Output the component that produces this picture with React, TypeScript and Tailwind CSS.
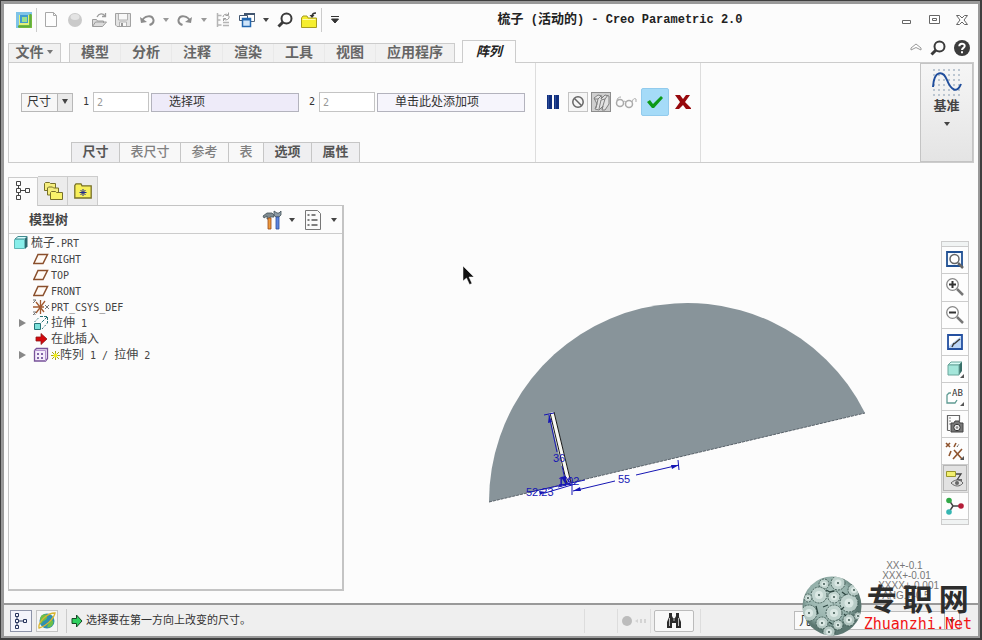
import type { ReactNode } from "react";

const quickIcons: Record<string, ReactNode> = {
  app: (
    <>
      <rect width="16" height="16" fill="#8cc63f" />
      <path d="M0 0h16v3H3v13H0z" fill="#7fc4e8" />
      <path d="M3 3h10v10H3z" fill="#e3f07c" />
      <path d="M4 3h8v8H4z" fill="#3f9bd0" />
      <path d="M6 5h5v5H6z" fill="#9be08f" />
      <path d="M14.500 2v12.500H2" fill="none" stroke="#5fae3f" strokeWidth="2" />
    </>
  ),
  new: (
    <path d="M2.500 .5h8l3 3v11h-11zM10.500 .5v3h3" fill="#fdfdfd" stroke="#a8a8a8" />
  ),
  sphere: (
    <>
      <circle cx="8" cy="8" r="7" fill="#cacaca" />
      <ellipse cx="8" cy="5" rx="4.500" ry="3" fill="#e4e4e4" />
    </>
  ),
  open: (
    <>
      <path d="M1.500 14V7.500h4l1 1.500h6v2M1.500 14.500l3-4.500h11l-4 4.500z" fill="#dcdcdc" stroke="#9c9c9c" />
      <path d="M6 5c2-4 6-4 8-1M14.500 1v3.500H11" fill="none" stroke="#9c9c9c" strokeWidth="1.300" />
    </>
  ),
  save: (
    <>
      <path d="M.5 1.500h15v13H2l-1.500-1.500z" fill="#e3e3e3" stroke="#a2a2a2" />
      <path d="M3.500 2v6h9V2M4.500 14v-4h7v4" fill="#f8f8f8" stroke="#b3b3b3" />
      <path d="M6 11h2v3H6z" fill="#999" />
    </>
  ),
  undo: (
    <>
      <path d="M3 9C5 4 13 2 14.500 8c.3 2.500-1 4-4 5" fill="none" stroke="#8c8c8c" strokeWidth="2" />
      <path d="M1 5l1 6 6-1z" fill="#8c8c8c" />
    </>
  ),
  redo: (
    <>
      <path d="M13 9C11 4 3 2 1.500 8c-.3 2.500 1 4 4 5" fill="none" stroke="#8c8c8c" strokeWidth="2" />
      <path d="M15 5l-1 6-6-1z" fill="#8c8c8c" />
    </>
  ),
  regen: (
    <>
      <path d="M2.500 1v14M2.500 3.500h4M2.500 8h3M2.500 13h4M8 10.500h6M8 13.500h6" fill="none" stroke="#b5b5b5" strokeWidth="1.500" />
      <path d="M8 5a3 3 0 0 1 5-2M14 4a3 3 0 0 1-5 3M13.500.5v3h-3M8.500 9V6.500H11" fill="none" stroke="#9e9e9e" />
    </>
  ),
  windows: (
    <>
      <path d="M5.500 1.500h10v8h-10z" fill="#fff" stroke="#55677d" />
      <path d="M5 1h11v2H5z" fill="#41556f" />
      <path d="M.5 3.500h8v5h-8z" fill="#fff" stroke="#41556f" />
      <path d="M3.500 6.500h8v8h-8z" fill="#cfe5fa" stroke="#2367b0" strokeWidth="1.500" />
      <path d="M3 6h9v2.500H3z" fill="#2367b0" />
    </>
  ),
  search: (
    <>
      <circle cx="9.500" cy="6.500" r="5" fill="none" stroke="#3a3a3a" strokeWidth="2" />
      <path d="M6 10l-4.500 4.500" stroke="#3a3a3a" strokeWidth="3" />
    </>
  ),
  folder: (
    <>
      <path d="M.5 15.500v-9.500l1.500-2h4l1 2h8.500v9.500z" fill="#f6ee2e" stroke="#a79c1e" />
      <path d="M1.500 7.500h13" stroke="#fffab0" />
      <path d="M11 4.500c0-2.500 1.500-3.500 4-3.500" fill="none" stroke="#333" strokeWidth="1.500" />
      <path d="M8.500 3h5L11 6z" fill="#333" />
    </>
  ),
};

function Icon({ children, className = "size-4", box = "0 0 16 16" }: { children: ReactNode; className?: string; box?: string }) {
  return (
    <svg aria-hidden="true" className={`shrink-0 ${className}`} viewBox={box}>
      {children}
    </svg>
  );
}

function Caret({ className = "text-[#444]" }: { className?: string }) {
  return (
    <svg aria-hidden="true" className={`h-1 w-2 shrink-0 ${className}`} viewBox="0 0 8 4">
      <path d="M1 0h6L4 4z" fill="currentColor" />
    </svg>
  );
}

function QuickButton({ name, label }: { name: string; label: string }) {
  return (
    <button aria-label={label} className="size-4 shrink-0" type="button">
      <Icon>{quickIcons[name]}</Icon>
    </button>
  );
}

function TitleBar() {
  return (
    <header className="flex h-9 items-center pr-[10px] pb-1 pl-3">
      <div className="flex h-6 items-center gap-2">
        <div className="-mr-[2px] flex h-full items-center gap-1 border-r border-[#ccc] pr-1">
          <QuickButton label="Creo" name="app" />
        </div>
        <QuickButton label="新建" name="new" />
        <QuickButton label="模型显示" name="sphere" />
        <QuickButton label="打开" name="open" />
        <QuickButton label="保存" name="save" />
        <QuickButton label="撤消" name="undo" />
        <span className="-mx-px">
          <Caret className="text-[#999]" />
        </span>
        <QuickButton label="重做" name="redo" />
        <span className="-mx-px">
          <Caret className="text-[#999]" />
        </span>
        <QuickButton label="重新生成" name="regen" />
        <QuickButton label="窗口" name="windows" />
        <span className="-mx-px">
          <Caret />
        </span>
        <QuickButton label="搜索" name="search" />
        <QuickButton label="关闭" name="folder" />
        <button aria-label="自定义" className="-ml-1 flex h-6 items-center border-l border-[#ccc] pl-2" type="button">
          <Icon box="0 0 10 8" className="h-2 w-[10px]">
            <path d="M1 .5h8M1.500 3h7L5 7z" fill="#333" stroke="#333" />
          </Icon>
        </button>
      </div>
      <h1 className="flex-1 text-center font-['Liberation_Mono','Noto_Sans_CJK_SC',monospace] text-xs font-bold whitespace-pre text-[#222]">
        <span className="text-[13px]">梳子</span> (<span className="text-[13px]">活动的</span>) - Creo Parametric 2.0
      </h1>
      <div className="flex items-center gap-4">
        <button aria-label="最小化" type="button">
          <Icon className="h-3 w-3" box="0 0 12 12">
            <path d="M2.500 6.500h8v3h-8z" fill="#fff" stroke="#666" />
          </Icon>
        </button>
        <button aria-label="最大化" type="button">
          <Icon className="h-3 w-3" box="0 0 12 12">
            <path d="M1.500 1.500h10v8h-10zM4.500 4.500h4v2h-4z" fill="#fff" stroke="#666" />
          </Icon>
        </button>
        <button aria-label="关闭窗口" type="button">
          <Icon className="h-3 w-3" box="0 0 12 12">
            <path d="M.5 1.500h3L6 4l2.500-2.500h3L8 6l3.500 4.500h-3L6 8l-2.500 2.500h-3L4 6z" fill="#fff" stroke="#666" />
          </Icon>
        </button>
      </div>
    </header>
  );
}

function RibbonTabs() {
  return (
    <nav className="mx-1 flex h-[22px] items-end text-sm font-bold text-[#666]">
      <button className="mr-2 flex h-[19px] w-[53px] items-center justify-center gap-[2px] border border-b-0 border-[#ccc] bg-[#f1f1f1] pb-[2px]" type="button">
        文件
        <Caret className="text-[#777]" />
      </button>
      <div className="flex h-[19px] border border-b-0 border-[#ccc] bg-[#f1f1f1]">
        {["模型", "分析", "注释", "渲染", "工具", "视图"].map((tab) => (
          <button className="w-[51px] border-r border-[#e9e9e9] pb-[2px] leading-4" key={tab} type="button">
            {tab}
          </button>
        ))}
        <button className="w-[78px] pb-[2px] leading-4" type="button">
          应用程序
        </button>
      </div>
      <button className="relative top-px ml-[7px] h-[23px] w-[54px] border border-b-0 border-[#ccc] bg-[#fcfcfc] text-[13px] text-[#222] italic" type="button">
        阵列
      </button>
      <div className="flex h-full flex-1 items-center justify-end gap-2 pr-1 pb-2">
        <button aria-label="折叠功能区" type="button">
          <Icon box="0 0 12 8" className="h-2 w-3">
            <path d="M1 5l5-4 5 4v2L6 4.500 1 7z" fill="#fff" stroke="#999" />
          </Icon>
        </button>
        <button aria-label="命令搜索" className="mt-[2px]" type="button">
          <Icon>{quickIcons.search}</Icon>
        </button>
        <button aria-label="帮助" className="mt-[2px]" type="button">
          <Icon>
            <circle cx="8" cy="8" r="8" fill="#3c3c3c" />
            <path d="M5.300 6.300c0-3.500 5.400-3.300 5.400-.3 0 1.800-2.700 1.900-2.700 4M8 11.200v2" fill="none" stroke="#fff" strokeWidth="2" />
          </Icon>
        </button>
      </div>
    </nav>
  );
}

const dashTabs = [
  { label: "尺寸", active: true, width: "w-[49px]" },
  { label: "表尺寸", active: false, width: "w-[62px]" },
  { label: "参考", active: false, width: "w-[49px]" },
  { label: "表", active: false, width: "w-9" },
  { label: "选项", active: true, width: "w-[49px]" },
  { label: "属性", active: true, width: "w-[49px]" },
];

function DimensionInput({ id, label, text, field }: { id: string; label: string; text: string; field: string }) {
  return (
    <>
      <label className="w-5 pr-1 text-right font-['DejaVu_Sans_Mono',monospace] text-[10px]" htmlFor={id}>
        {label}
      </label>
      <input
        className="h-5 w-14 border border-[#c4c4c4] bg-white px-[3px] font-['DejaVu_Sans_Mono',monospace] text-[10px] text-[#999]"
        defaultValue="2"
        id={id}
      />
      <button className={`ml-[2px] h-[19px] w-[148px] border border-[#b3b3bd] pl-[17px] text-left leading-4 ${field}`} type="button">
        {text}
      </button>
    </>
  );
}

function Ribbon() {
  return (
    <section className="mx-1 flex h-[101px] border border-[#ccc]">
      <div className="flex w-[527px] flex-col justify-between border-r border-[#ddd]">
        <div className="flex items-center pt-[29px] pl-3 text-xs text-[#333]">
          <div className="relative">
            <select
              aria-label="阵列类型"
              className="h-[19px] w-[52px] appearance-none border border-[#b8b8b8] bg-[#f7f7f7] pl-[5px] leading-4"
            >
              <option>尺寸</option>
            </select>
            <span className="pointer-events-none absolute inset-y-0 right-0 flex w-4 items-center justify-center border border-[#b8b8b8] bg-[#eaeaea]">
              <Icon box="0 0 8 6" className="h-[6px] w-2">
                <path d="M1 0h6L4 5z" fill="#444" />
              </Icon>
            </span>
          </div>
          <DimensionInput field="bg-[#eeebf9]" id="dim-1" label="1" text="选择项" />
          <DimensionInput field="bg-[#f6f5fc]" id="dim-2" label="2" text="单击此处添加项" />
        </div>
        <div className="ml-[62px] flex h-5 text-[13px]">
          {dashTabs.map((tab) => (
            <button
              className={`-mr-px h-full border border-b-0 border-[#c6c6c6] pb-[2px] leading-4 ${tab.width} ${
                tab.active ? "bg-[#efeff1] font-bold text-[#555]" : "bg-[#f8f8f8] font-medium text-[#808080]"
              }`}
              key={tab.label}
              type="button"
            >
              {tab.label}
            </button>
          ))}
        </div>
      </div>
      <div className="flex w-[165px] items-center border-r border-[#ddd] pb-[21px] pl-[10px]">
        <button aria-label="暂停" className="mr-2" type="button">
          <Icon box="0 0 14 14" className="size-[14px]">
            <path d="M1 0h5v14H1zM8 0h5v14H8z" fill="#12307e" />
            <path d="M2 0h1v14H2zM9 0h1v14H9z" fill="#2a4c98" />
          </Icon>
        </button>
        <button aria-label="无预览" className="mr-[3px] flex size-5 items-center justify-center border border-[#c4c4c4] bg-[#f6f6f6]" type="button">
          <Icon box="0 0 14 14" className="size-[14px]">
            <circle cx="7" cy="7" r="5.200" fill="none" stroke="#666" strokeWidth="1.500" />
            <path d="M3.500 3.500l7 7" stroke="#666" strokeWidth="1.500" />
          </Icon>
        </button>
        <button aria-label="分离预览" className="mr-1 flex size-5 items-center justify-center border border-[#8d8d8d] bg-[#cfcfcf]" type="button">
          <Icon box="0 0 18 18" className="size-[18px]">
            <path d="M2 5l4-3 4 1-1 3 4-4 4 1v8l-4 6h-3l1-4-4 4-4-1 2-5z" fill="#e2e2e2" stroke="#808080" />
            <path d="M2 6h4l3-3M6 6l-2 9M9 7l-2 9M13 6l-3 10M9 7l4-1 3-4" fill="none" stroke="#808080" />
          </Icon>
        </button>
        <button aria-label="特征预览" className="mr-1" type="button">
          <Icon box="0 0 22 16" className="h-4 w-[22px]">
            <circle cx="5" cy="9" r="3.500" fill="none" stroke="#aaa" strokeWidth="1.500" />
            <circle cx="14" cy="10" r="3.500" fill="none" stroke="#aaa" strokeWidth="1.500" />
            <path d="M8 8c1-1 2-1 3 0M2 7c0-3 2-4 4-4M17 8c1-3 2-4 4-3v3" fill="none" stroke="#aaa" />
          </Icon>
        </button>
        <button aria-label="确定" className="mr-[6px] flex size-7 items-center justify-center rounded-[2px] border border-[#92cbed] bg-[#a5dbf8]" type="button">
          <Icon box="0 0 18 16" className="h-4 w-[18px]">
            <path d="M1 8l3-2 3 4L15 2l2 2-9 10H6z" fill="#0d9a18" />
          </Icon>
        </button>
        <button aria-label="取消" type="button">
          <Icon>
            <path d="M0 1h5l3 4 3-4h4l-5 7 6 6v1h-5l-3-4-4 4H0l5-7z" fill="#97090d" />
          </Icon>
        </button>
      </div>
      <div className="flex-1" />
      <button
        className="flex w-[53px] flex-col items-center border border-[#c4c4c4] bg-linear-to-b from-[#f6f6f6] to-[#e4e4e4] pt-1 text-[13px] font-bold text-[#444]"
        type="button"
      >
        <Icon box="0 0 30 30" className="size-[30px]">
          {[2, 7, 12, 17, 22, 27].map((y) => (
            <path d={`M1 ${y}h28`} key={y} stroke="#a9b8c6" strokeDasharray="2 3" strokeWidth="1.500" />
          ))}
          <path d="M1 19C2 2 11 2 15 12s10 14 14 4" fill="none" stroke="#1f4d9c" strokeWidth="2" />
        </Icon>
        <span className="mb-2 leading-4">基准</span>
        <Caret />
      </button>
    </section>
  );
}

const treeGlyphs: Record<string, ReactNode> = {
  part: (
    <>
      <path d="M2 4l3-2.500h9L12 4z" fill="#d8ffff" stroke="#438b90" />
      <path d="M12 4l2.500-2.500v10L12 14z" fill="#2b686e" />
      <path d="M1.500 4.500h10v9h-10z" fill="#87eeea" stroke="#5fb6b6" />
    </>
  ),
  plane: <path d="M5 3.500h9.500l-4.500 9H.8z" fill="#fffaf5" stroke="#8a4f2c" strokeWidth="1.500" />,
  csys: (
    <>
      <path d="M0 8h11M7.500 1v14M3 3l8 10M12 2L3 14" fill="none" stroke="#a25b31" strokeWidth="1.300" />
      <path d="M12 6l4 4M16 6l-4 4M0 1h3M0 4l3-3M0 13h3l-3 3h3" fill="none" stroke="#777" />
    </>
  ),
  extrude: (
    <>
      <path d="M1.500 8.500h6v6h-6z" fill="#7be0da" stroke="#257276" />
      <path d="M1.500 7l5-5M9 14l5.500-6" stroke="#357c81" strokeDasharray="2 1.500" />
      <path d="M7 1.500h7.500V8M14 2L8 8" fill="none" stroke="#257276" strokeDasharray="3 1" />
    </>
  ),
  insert: <path d="M3 6h5V2.500L14 8l-6 5.500V10H3z" fill="#d4080d" stroke="#8d1a1a" strokeWidth=".8" />,
  pattern: (
    <>
      <path d="M1.500 3.500l2-2h11v10l-2 2.500h-11z" fill="#f4edfb" stroke="#775299" strokeWidth="1.300" />
      <path d="M12.500 14V3.500h-11" fill="none" stroke="#b394cf" />
      <path d="M4 6h2v2H4zM8 6h2v2H8zM4 10h2v2H4zM8 10h2v2H8z" fill="#8266a8" />
    </>
  ),
};

const treeItems: { glyph: string; label: string; latin?: string; expandable?: boolean; marked?: boolean }[] = [
  { glyph: "plane", label: "", latin: "RIGHT" },
  { glyph: "plane", label: "", latin: "TOP" },
  { glyph: "plane", label: "", latin: "FRONT" },
  { glyph: "csys", label: "", latin: "PRT_CSYS_DEF" },
  { glyph: "extrude", label: "拉伸", latin: " 1", expandable: true },
  { glyph: "insert", label: "在此插入" },
  { glyph: "pattern", label: "阵列 1 / 拉伸 2", expandable: true, marked: true },
];

function Latin({ children }: { children: ReactNode }) {
  return <span className="font-['DejaVu_Sans_Mono',monospace] text-[10px]">{children}</span>;
}

function ModelTree() {
  return (
    <aside className="ml-1 flex w-[336px] shrink-0 flex-col pt-[13px] pb-3">
      <div className="flex h-[29px]">
        <button aria-label="模型树" className="relative top-px flex h-[29px] w-[30px] items-center justify-center border border-b-0 border-[#ccc] bg-[#fcfcfc] pb-1" type="button">
          <Icon box="0 0 14 20" className="h-5 w-[14px]">
            <path d="M.5 1.500h4v4h-4zM.5 8.500h4v4h-4zM.5 15.500h4v4h-4zM9.500 8.500h4v4h-4zM2.500 5.500v3M2.500 12.500v3M4.500 10.500h5" fill="none" stroke="#444" />
          </Icon>
        </button>
        <button aria-label="文件夹浏览器" className="flex w-[30px] items-center justify-center border border-b-0 border-l-0 border-[#ccc] bg-[#ececec]" type="button">
          <Icon box="0 0 20 20" className="size-5">
            <path d="M1.500 9.500v-7l1-1h4l1 1h5v7z" fill="#f5ee7e" stroke="#77702a" />
            <path d="M4.500 14v-7l1-1h4l1 1h5v7z" fill="#f5ee7e" stroke="#77702a" />
            <path d="M7.500 18.500v-7l1-1h4l1 1h6v7z" fill="#f8f26a" stroke="#77702a" />
          </Icon>
        </button>
        <button aria-label="收藏夹" className="flex w-[30px] items-center justify-center border border-b-0 border-l-0 border-[#ccc] bg-[#ececec]" type="button">
          <Icon box="0 0 18 16" className="h-4 w-[18px]">
            <path d="M.8 15V2.500l1.200-1.700h5l1 2h9.200V15z" fill="#f8f05a" stroke="#77702a" strokeWidth="1.300" />
            <path d="M9 6v7M5.500 9.500h7M6.500 7l5 5M11.500 7l-5 5" stroke="#222a8c" />
          </Icon>
        </button>
      </div>
      <div className="flex-1 border border-r-2 border-b-2 border-[#c4c4c4]">
        <div className="flex h-7 items-center border-b border-[#ccc] pr-1 pl-5">
          <h2 className="flex-1 text-[13px] font-bold text-[#444]">模型树</h2>
          <button aria-label="设置" className="mr-2 flex items-center gap-[6px]" type="button">
            <Icon box="0 0 20 20" className="size-5">
              <path d="M1 6l4-3h5l2 2v2H8v2H5V6L2 8z" fill="#7f8b91" stroke="#435057" strokeWidth=".8" />
              <path d="M6 8h3v11H6z" fill="#ed9a3d" stroke="#9a4a1b" strokeWidth=".8" />
              <path d="M12 1v4l2 2h3l2-2V1l-2 2h-2z" fill="#8c9aa5" stroke="#435057" strokeWidth=".8" />
              <path d="M14 7h3v12h-3z" fill="#5d86df" stroke="#2c4c9a" strokeWidth=".8" />
            </Icon>
            <Caret />
          </button>
          <button aria-label="显示" className="flex items-center gap-2" type="button">
            <Icon box="0 0 18 20" className="h-5 w-[18px]">
              <path d="M1.500.5h12l3 3v16h-15z" fill="#fafafa" stroke="#777" />
              <path d="M3.500 5h2M3.500 10h2M3.500 15h2M7.500 5h4M7.500 10h6M7.500 15h6" stroke="#555" strokeWidth="1.500" />
            </Icon>
            <Caret />
          </button>
        </div>
        <ul className="pt-px text-xs leading-4 whitespace-pre text-[#444]">
          <li className="flex h-4 items-center gap-[2px] pl-1">
            <Icon>{treeGlyphs.part}</Icon>
            <span className="leading-4">
              梳子<Latin>.PRT</Latin>
            </span>
          </li>
          {treeItems.map((item) => (
            <li className="flex h-4 items-center pl-2" key={item.glyph + item.latin}>
              <span className="w-4 shrink-0">
                {item.expandable && (
                  <button aria-label="展开" className="block" type="button">
                    <Icon box="0 0 10 10" className="size-[10px]">
                      <path d="M2 1l7 4-7 4z" fill="#888" />
                    </Icon>
                  </button>
                )}
              </span>
              <Icon>{treeGlyphs[item.glyph]}</Icon>
              {item.marked ? (
                <span className="ml-[2px] flex items-center leading-4">
                  <Icon box="0 0 9 9" className="size-[9px]">
                    <path d="M4.500 0v9M0 4.500h9M1 1l7 7M8 1L1 8" stroke="#a9a71c" />
                    <circle cx="4.500" cy="4.500" r="2" fill="#f3f01c" />
                  </Icon>
                  <span>
                    阵列<Latin> 1 / </Latin>拉伸<Latin> 2</Latin>
                  </span>
                </span>
              ) : (
                <span className="ml-[2px] leading-4">
                  {item.label}
                  {item.latin && <Latin>{item.latin}</Latin>}
                </span>
              )}
            </li>
          ))}
        </ul>
      </div>
    </aside>
  );
}

function Viewport() {
  return (
    <div className="relative min-w-0 flex-1">
      <svg aria-label="梳子" className="absolute inset-0 size-full" role="img" viewBox="344 163 597 440">
        <path d="M489 502A198.400 198.400 0 0 1 865 413Z" fill="#88949a" />
        <path d="M489 502L865 413" stroke="#59626a" strokeDasharray="3 1" />
        <path d="M549 413l5-1 17 70-5 2z" fill="#f7f7f2" />
        <path d="M554 412l17 71M550 413l17 71" fill="none" stroke="#1a1a1a" />
        <g fill="none" stroke="#1616b4">
          <path d="M544 415l10-2M549 415l8 37M562 466l4 18M530 492l55-12M545 493l30-9M572 484v11M573 491l42-10M636 475l43-10M678 460l1 10" />
          <path d="M558 487l12-3M561 478v9M566 477l5 9M571 477l-6 9" />
        </g>
        <path d="M549 415l-1 8 4-1zM566 485l-5-8 5-1zM573 491l7-4 1 4zM679 465l-8 0 1 4zM546 492l-7-1 1 4z" fill="#1616b4" />
        <g className="font-['Liberation_Sans',sans-serif] text-[11px]" fill="#1616b4">
          <text x="553" y="462">36</text>
          <text x="618" y="483">55</text>
          <text x="526" y="496">52.23</text>
          <text x="558" y="485">1.92</text>
        </g>
        <path d="M463 266v15l3.500-3 3 6.500 2.500-1-3-6.500h5z" fill="#111" stroke="#fff" strokeWidth=".5" />
      </svg>
      <div className="absolute right-[2px] bottom-[2px] text-[10px] leading-[10px] text-[#777]">
        <p className="pl-2">XX+-0.1</p>
        <p className="pl-1">XXX+-0.01</p>
        <p>XXXX+-0.001</p>
        <p className="pl-1">ANG.+-0.5</p>
      </div>
    </div>
  );
}

const corner = <path d="M19 15v4h-4z" fill="#555" />;

const viewTools: { label: string; active?: boolean; glyph: ReactNode }[] = [
  {
    label: "重新调整",
    glyph: (
      <>
        <path d="M2 2h15v14H2z" fill="#f5faff" stroke="#205093" strokeWidth="1.800" />
        <circle cx="9.500" cy="9" r="4.500" fill="#fff" stroke="#666" strokeWidth="1.500" />
        <path d="M13 13l5 5" stroke="#666" strokeWidth="2.500" />
      </>
    ),
  },
  {
    label: "放大",
    glyph: (
      <>
        <circle cx="7.500" cy="7.500" r="5.800" fill="#fff" stroke="#888" strokeWidth="1.300" />
        <path d="M4 7.500h7M7.500 4v7" stroke="#333" strokeWidth="2" />
        <path d="M12 12l6 6" stroke="#777" strokeWidth="2.500" />
      </>
    ),
  },
  {
    label: "缩小",
    glyph: (
      <>
        <circle cx="7.500" cy="7.500" r="5.800" fill="#fff" stroke="#888" strokeWidth="1.300" />
        <path d="M4 7.500h7" stroke="#333" strokeWidth="2" />
        <path d="M12 12l6 6" stroke="#777" strokeWidth="2.500" />
      </>
    ),
  },
  {
    label: "重画",
    glyph: (
      <>
        <path d="M3 3h14v14H3z" fill="#bcd6f6" stroke="#2450a0" strokeWidth="1.800" />
        <path d="M4 4h12L4 14z" fill="#fff" />
        <path d="M15 7l-6 5M9 11l-2 4" stroke="#3b3b3b" strokeWidth="1.500" />
      </>
    ),
  },
  {
    label: "显示样式",
    glyph: (
      <>
        <path d="M3 6l3-3h11l-3 3z" fill="#d9fbf5" stroke="#6ba69c" />
        <path d="M14 6l3-3v9l-3 4z" fill="#386f68" />
        <path d="M3 6h11v10H3z" fill="#a4e6da" stroke="#6ba69c" />
        {corner}
      </>
    ),
  },
  {
    label: "已命名视图",
    glyph: (
      <>
        <path d="M6 6H4L2 8v8h8l2-3" fill="#fff" stroke="#5f9b93" strokeWidth="1.300" />
        <text className="font-['DejaVu_Sans_Mono',monospace] text-[9px]" fill="#333" x="7" y="9">
          AB
        </text>
        {corner}
      </>
    ),
  },
  {
    label: "视图管理器",
    glyph: (
      <>
        <path d="M2.500 16.500V1.500h12V7M2.500 16.500H5" fill="none" stroke="#666" strokeWidth="1.200" />
        <path d="M4 4h2M4 7h2M4 10h2" stroke="#888" />
        <path d="M6 9h3l1-2h4l1 2h3v9H6z" fill="#777" stroke="#444" />
        <circle cx="12" cy="13.500" r="3.200" fill="#f3f3f3" stroke="#333" />
        <circle cx="12" cy="13.500" r="1.300" fill="#888" />
      </>
    ),
  },
  {
    label: "基准显示过滤器",
    glyph: (
      <>
        <path d="M1 2l4 4M5 2L1 6M11 2l-2 4M6 10l-2 5M9 9l8 9M17 8L8 18" stroke="#8f542e" strokeWidth="1.600" />
        <path d="M12 6l2-3" stroke="#555" strokeDasharray="2 1" />
        {corner}
      </>
    ),
  },
  {
    label: "注释显示",
    active: true,
    glyph: (
      <>
        <path d="M1.500 2.500h9v5h-9z" fill="#f3f06e" stroke="#98952b" />
        <path d="M11 5h5l-4 6h5" fill="none" stroke="#444" strokeWidth="1.300" />
        <path d="M6 14c4-4 9-4 12 0-3 4-8 4-12 0z" fill="#ddd" stroke="#666" />
        <circle cx="12" cy="14" r="2" fill="#666" />
      </>
    ),
  },
  {
    label: "旋转中心",
    glyph: (
      <>
        <path d="M4 4l4 6 8 0M8 10l-4 6" fill="none" stroke="#444" strokeWidth="1.500" />
        <circle cx="4" cy="4.500" r="2.800" fill="#31a847" />
        <circle cx="16" cy="10" r="2.800" fill="#b41c37" />
        <circle cx="4" cy="16" r="2.800" fill="#35b6b2" />
      </>
    ),
  },
];

function ViewToolbar() {
  return (
    <div className="mt-[78px] mr-[9px] flex h-[284px] w-7 shrink-0 flex-col border border-[#ccc] bg-[#f0f3f3] py-1">
      {viewTools.map((tool) => (
        <button
          aria-label={tool.label}
          className={`flex min-h-0 flex-1 items-center justify-center border-t border-[#ccc] last:border-b ${tool.active ? "bg-[#e2e2e2] outline -outline-offset-2 outline-[#b5b5b5]" : "bg-[#fdfdfd]"}`}
          key={tool.label}
          type="button"
        >
          <Icon box="0 0 20 20" className="size-5">
            {tool.glyph}
          </Icon>
        </button>
      ))}
    </div>
  );
}

function StatusBar() {
  return (
    <footer className="flex h-[33px] items-center border-t-2 border-[#999] bg-[#efefef] px-[6px]">
      <button aria-label="导航器" className="mr-1 flex size-[22px] items-center justify-center border border-[#8d93a8] bg-[#f3f4fb]" type="button">
        <Icon className="size-4">
          <path d="M2.500.5h3v3h-3zM2.500 6.500h3v3h-3zM2.500 12.500h3v3h-3zM10.500 6.500h3v3h-3zM4 3.500v3M4 9.500v3M5.500 8h5" fill="none" stroke="#26345c" />
        </Icon>
      </button>
      <button aria-label="浏览器" className="flex size-[22px] items-center justify-center border border-[#c4c4c4] bg-[#f6f6f6]" type="button">
        <Icon box="0 0 18 18" className="size-[18px]">
          <circle cx="9" cy="9" r="7.500" fill="#2f8fb0" />
          <path d="M4 3c4-2 6 0 5 3s-5 2-5 6C1 9 2 5 4 3zM12 8c3 0 4 1 3 4s-4 4-6 3z" fill="#6cc04a" />
          <path d="M1 16C0 10 9 1 17 1c-1 5-8 13-16 15z" fill="none" stroke="#d9b630" strokeWidth="1.300" />
        </Icon>
      </button>
      <div className="ml-2 flex h-6 items-center gap-[3px] border-l border-[#ccc] pl-1">
        <Icon box="0 0 12 14" className="h-[14px] w-3">
          <path d="M1 4.500h4.500V1L11 7l-5.500 6V9.500H1z" fill="#2fd05f" stroke="#174c27" />
        </Icon>
        <p className="text-[11px] text-[#333]">选择要在第一方向上改变的尺寸。</p>
      </div>
      <div className="flex-1" />
      <div className="mr-8 h-6 border-l border-[#ddd]" />
      <div className="mr-[3px] flex h-6 w-[34px] items-center justify-end border-x border-[#ddd]">
        <Icon box="0 0 30 14" className="h-[14px] w-[30px]">
          <circle cx="7" cy="7" r="5" fill="#bcbcbc" />
          <path d="M15 7l3-2v4zM20 5h2v4h-2zM24 5h2v4h-2z" fill="#d4d4d4" />
        </Icon>
      </div>
      <button aria-label="查找" className="flex h-[22px] w-10 items-center justify-center rounded-[2px] border border-[#bbb] bg-[#f8f8f8]" type="button">
        <Icon box="0 0 18 16" className="h-4 w-[18px]">
          <path d="M4 0h3v3l1 2h2l1-2V0h3v4l2 5v6h-5v-5H7v5H2V9l2-5z" fill="#2b2b2b" />
          <path d="M4.500 5v8M13.500 5v8M9 5v3" stroke="#bbb" />
        </Icon>
      </button>
      <div className="mr-[93px] ml-[6px] h-6 border-l border-[#ddd]" />
      <div className="relative mr-3">
        <select aria-label="选择过滤器" className="block h-[19px] w-[166px] appearance-none border border-[#bbb] bg-[#fafafa] px-1 text-xs leading-4 text-[#333]">
          <option>几何</option>
        </select>
        <span className="pointer-events-none absolute inset-y-0 right-0 flex w-4 items-center justify-center border border-[#bbb]">
          <Caret />
        </span>
      </div>
    </footer>
  );
}

// centre x, centre y, radius of each rosette on the ball
const rosettes = [
  [22, 8, 5],
  [36, 7, 7],
  [17, 19, 8],
  [32, 21, 6],
  [47, 27, 9],
  [32, 37, 8],
  [7, 37, 8],
  [20, 47, 6],
  [36, 49, 5],
  [47, 44, 6],
  [52, 14, 6],
  [27, 56, 6],
  [6, 22, 4],
  [56, 40, 4],
];

function SiteMark() {
  return (
    <a className="absolute right-[6px] bottom-0 z-10 flex items-end" href="#zhuanzhi">
      <svg aria-hidden="true" className="size-[60px]" viewBox="0 0 60 60">
        <defs>
          <radialGradient cx="45%" cy="40%" id="ball">
            <stop offset="0%" stopColor="#b4cbc5" />
            <stop offset="75%" stopColor="#94b0aa" />
            <stop offset="100%" stopColor="#5b7771" />
          </radialGradient>
          <clipPath id="ball-edge">
            <circle cx="30" cy="30" r="29.500" />
          </clipPath>
        </defs>
        <circle cx="30" cy="30" fill="url(#ball)" r="29.500" />
        <g clipPath="url(#ball-edge)">
          {rosettes.map(([x, y, r]) => (
            <g key={`${x}-${y}`}>
              <circle cx={x} cy={y} fill="#c8dad5" fillOpacity=".8" r={r} stroke="#3c5751" strokeDasharray="2 1" strokeWidth=".9" />
              <circle cx={x} cy={y} fill="#dbe8e4" r={r / 2} />
              <circle cx={x} cy={y} fill="#2d4641" r=".9" />
            </g>
          ))}
          <path d="M24 14l4 2 4-1M40 16l4 3M26 29l-5 2M39 34l3-3M14 30l2 8M27 46l3 2M42 38l2 2" fill="none" stroke="#2d4641" strokeWidth="1.300" />
        </g>
      </svg>
      <span className="ml-[2px] flex flex-col">
        <span className="flex justify-center gap-[6px] text-[30px] leading-7 font-bold text-[#2d2d2d]">
          <span>专</span>
          <span>职</span>
          <span>网</span>
        </span>
        <span className="pb-[2px] font-['DejaVu_Sans_Mono',monospace] text-[15px] leading-5 text-[#f01414]">Zhuanzhi.Net</span>
      </span>
    </a>
  );
}

export default function App() {
  return (
    <div className="flex min-h-screen flex-col border-t border-r-2 border-b-2 border-l border-[#3f3f3f] font-['Liberation_Sans','Noto_Sans_CJK_SC',sans-serif]">
      <div className="relative flex flex-1 flex-col border-t-3 border-r-2 border-b-2 border-l-3 border-[#999] bg-[#fcfcfc]">
        <TitleBar />
        <RibbonTabs />
        <Ribbon />
        <main className="flex flex-1">
          <ModelTree />
          <Viewport />
          <ViewToolbar />
        </main>
        <StatusBar />
        <SiteMark />
      </div>
    </div>
  );
}
